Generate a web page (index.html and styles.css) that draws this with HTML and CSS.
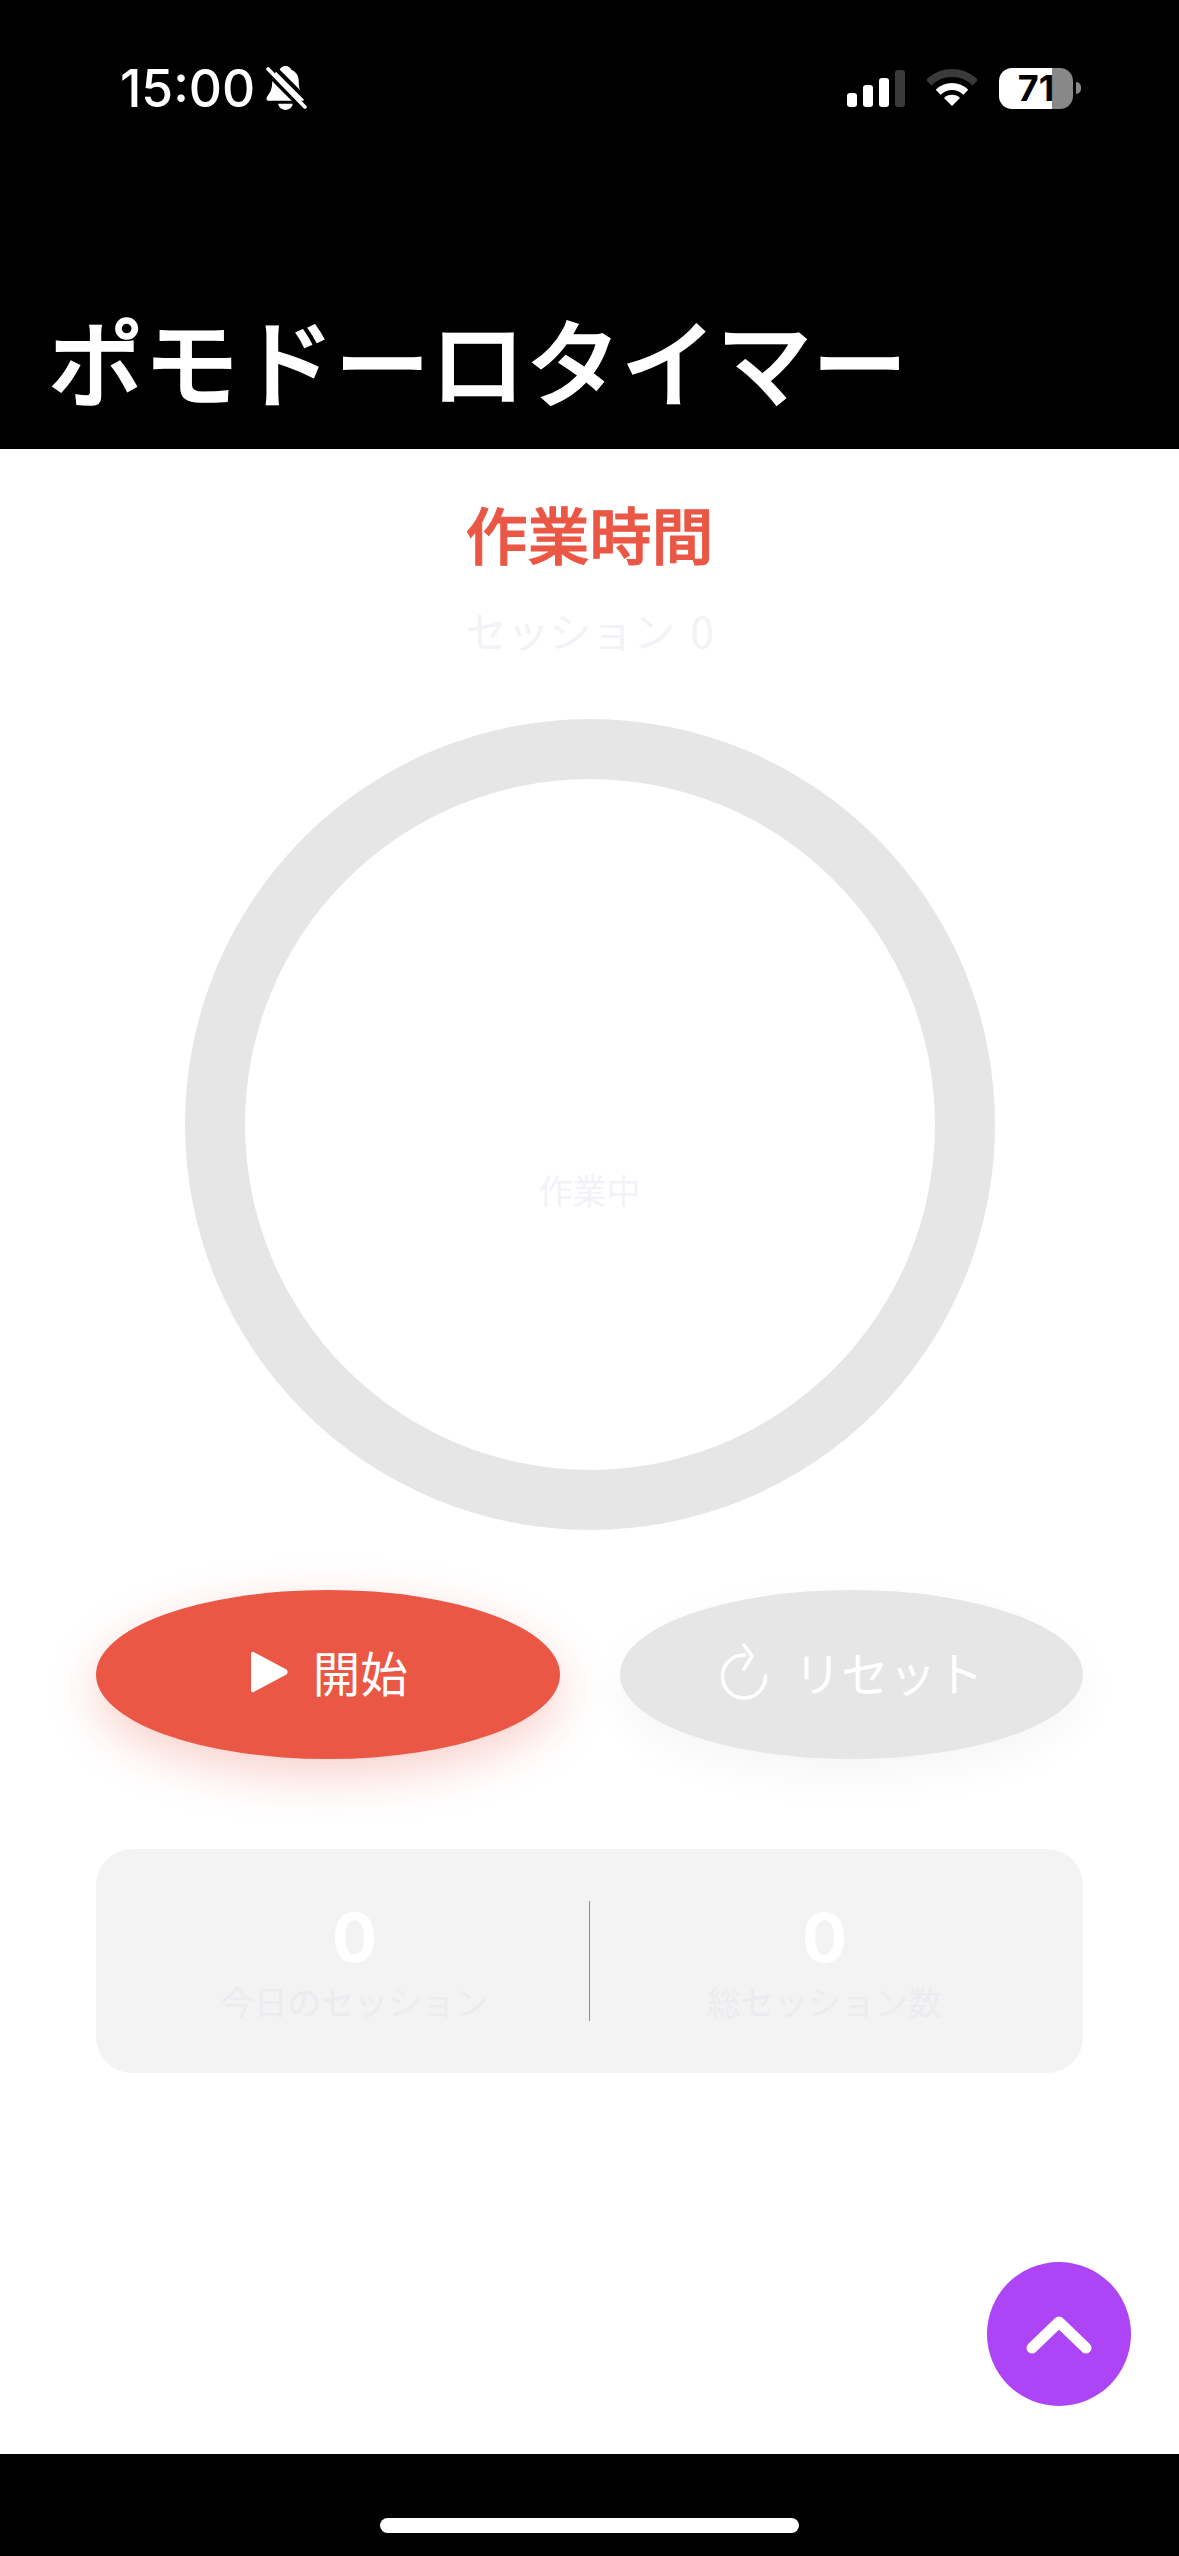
FILE: index.html
```html
<!DOCTYPE html>
<html lang="ja">

<head>
    <meta charset="UTF-8">
    <meta name="viewport" content="width=device-width, initial-scale=1.0">
    <title>ポモドーロタイマー</title>
    <link rel="stylesheet" href="styles.css">
</head>

<body>
    <header class="top">
        <div class="status-bar">
            <div class="status-left">
                <span class="clock">15:00</span>
                <svg class="bell" viewBox="0 0 40 44">
                    <path d="M19 0c3 0 5 2 6 4 5 2 7 6 7 12 0 7 2 10 5 14 1 2 1 4-2 4H3c-3 0-3-2-2-4 3-4 5-7 5-14 0-6 2-10 7-12 1-2 3-4 6-4z" fill="#fff" />
                    <path d="M12 37h14c0 3-3 6-7 6s-7-3-7-6z" fill="#fff" />
                    <path d="M-1 5 35 41" stroke="#000" stroke-width="4" />
                    <path d="M6 -1 42 35" stroke="#000" stroke-width="4" />
                    <path d="M2 3 38 40" stroke="#fff" stroke-width="3.6" stroke-linecap="round" />
                </svg>
            </div>
            <div class="status-right">
                <div class="signal">
                    <span class="bar bar-1"></span>
                    <span class="bar bar-2"></span>
                    <span class="bar bar-3"></span>
                    <span class="bar bar-4"></span>
                </div>
                <svg class="wifi" viewBox="0 0 50 38">
                    <path d="M1.7 13.7A33 33 0 0 1 48.3 13.7" fill="none" stroke="#3a3a3a" stroke-width="8" />
                    <path d="M11.2 23.2A19.5 19.5 0 0 1 38.8 23.2" fill="none" stroke="#fff" stroke-width="7" />
                    <path d="M25 37 17 29A11.3 11.3 0 0 1 33 29Z" fill="#fff" />
                </svg>
                <div class="battery">
                    <div class="battery-body">71</div>
                    <div class="battery-nub"></div>
                </div>
            </div>
        </div>
        <h1 class="app-title">ポモドーロタイマー</h1>
    </header>

    <main class="content">
        <h2 class="mode">作業時間</h2>
        <p class="session">セッション 0</p>

        <div class="ring">
            <span class="ring-label">作業中</span>
        </div>

        <div class="buttons">
            <button class="btn btn-start">
                <svg class="icon-play" viewBox="0 0 38 42">
                    <path d="M1 3c0-2.500 2-3 3.500-1.500L36.500 18.500c1.500 1.500 1.500 3.500 0 5L4.500 40.500C3 42 1 41.500 1 39Z" fill="#fff" />
                </svg>
                開始
            </button>
            <button class="btn btn-reset">
                <svg class="icon-reset" viewBox="0 0 48 58">
                    <path d="M44.500 33A21.500 21.500 0 1 1 24 12" fill="none" stroke="#fff" stroke-width="3.400" stroke-linecap="round" />
                    <path d="M23 2 31 13 23 26" fill="none" stroke="#fff" stroke-width="3.400" stroke-linecap="round" stroke-linejoin="round" />
                </svg>
                リセット
            </button>
        </div>

        <div class="stats">
            <div class="stat">
                <div class="stat-value">0</div>
                <div class="stat-label">今日のセッション</div>
            </div>
            <div class="stat-divider"></div>
            <div class="stat">
                <div class="stat-value">0</div>
                <div class="stat-label">総セッション数</div>
            </div>
        </div>

        <button class="fab">
            <svg viewBox="0 0 144 144">
                <path d="M45 86 72 60 99 86" fill="none" stroke="#fff" stroke-width="11" stroke-linecap="round" stroke-linejoin="round" />
            </svg>
        </button>
    </main>

    <footer class="home-area">
        <div class="home-bar"></div>
    </footer>
</body>

</html>
```

FILE: styles.css
```css
* {
    box-sizing: border-box;
}

body {
    margin: 0;
    width: 1179px;
    height: 2556px;
    display: flex;
    flex-direction: column;
    background: white;
    font-family: "Noto Sans CJK JP", "Noto Sans", sans-serif;
    overflow: hidden;
}

.top {
    height: 449px;
    background: black;
    color: white;
    display: flex;
    flex-direction: column;
    justify-content: space-between;
}

.status-bar {
    display: flex;
    justify-content: space-between;
    padding: 60px 98px 0 120px;
}

.status-left {
    display: flex;
    align-items: center;
    gap: 11px;
    height: 56px;
}

.clock {
    font-family: Inter, sans-serif;
    font-size: 51.500px;
    font-weight: 500;
    line-height: 56px;
}

.bell {
    width: 41px;
    height: 45px;
}

.status-right {
    display: flex;
    align-items: center;
    gap: 22px;
    height: 56px;
}

.signal {
    display: flex;
    align-items: flex-end;
    gap: 6px;
    height: 37px;
}

.bar {
    width: 10px;
    border-radius: 3px;
    background: white;
}

.bar-1 {
    height: 14px;
}

.bar-2 {
    height: 22px;
}

.bar-3 {
    height: 29px;
}

.bar-4 {
    height: 37px;
    background: #3a3a3a;
}

.wifi {
    width: 50px;
    height: 38px;
}

.battery {
    display: flex;
    align-items: center;
    gap: 3px;
}

.battery-body {
    width: 74px;
    height: 41px;
    border-radius: 13px;
    background: linear-gradient(90deg, white 72%, #888 72%);
    color: black;
    font-family: Inter, sans-serif;
    font-size: 36px;
    font-weight: 700;
    line-height: 41px;
    text-align: center;
}

.battery-nub {
    width: 5px;
    height: 12px;
    background: #888;
    border-radius: 0 6px 6px 0;
}

.app-title {
    margin: 0;
    padding: 0 0 35px 48px;
    font-size: 95.500px;
    font-weight: 500;
    -webkit-text-stroke: 1.500px white;
    line-height: 110px;
}

.content {
    position: relative;
    flex: 1;
    display: flex;
    flex-direction: column;
    align-items: center;
    padding-top: 44px;
}

.mode {
    margin: 0;
    color: #ea5745;
    font-size: 62px;
    font-weight: 500;
    -webkit-text-stroke: 1px #ea5745;
    line-height: 80px;
}

.session {
    margin: 32px 0 0;
    color: #f2f2f7;
    font-size: 42px;
    word-spacing: 6px;
    line-height: 50px;
}

.ring {
    width: 810px;
    height: 811px;
    margin-top: 64px;
    border: 60px solid #e6e6e6;
    border-radius: 50%;
    display: flex;
    align-items: center;
    justify-content: center;
    padding-top: 130px;
}

.ring-label {
    color: #f2f2f7;
    font-size: 34px;
    line-height: 40px;
}

.buttons {
    display: flex;
    gap: 60px;
    width: 987px;
    margin-top: 60px;
}

.btn {
    flex: 1;
    height: 169px;
    padding: 0 0 6px 2px;
    border: none;
    border-radius: 50%;
    color: white;
    font-family: inherit;
    font-size: 47.500px;
    display: flex;
    align-items: center;
    justify-content: center;
    gap: 25px;
}

.btn-start {
    background: #ea5745;
    box-shadow: 0 16px 48px rgba(235, 88, 71, 0.28);
}

.btn-reset {
    background: #e6e6e6;
    box-shadow: 0 16px 48px rgba(0, 0, 0, 0.04);
}

.icon-play {
    width: 38px;
    height: 42px;
}

.icon-reset {
    width: 48px;
    height: 58px;
}

.stats {
    width: 987px;
    height: 224px;
    margin-top: 90px;
    padding: 0 24px;
    border-radius: 36px;
    background: #f3f3f3;
    display: flex;
    align-items: center;
}

.stat {
    flex: 1;
    text-align: center;
}

.stat-value {
    color: white;
    font-family: Inter, sans-serif;
    font-size: 67px;
    font-weight: 700;
    line-height: 80px;
}

.stat-label {
    color: #ebebf0;
    font-size: 33.500px;
    line-height: 46px;
}

.stat-divider {
    width: 1px;
    height: 120px;
    background: #8e8e8e;
}

.fab {
    position: absolute;
    right: 48px;
    bottom: 48px;
    width: 144px;
    height: 144px;
    padding: 0;
    border: none;
    border-radius: 50%;
    background: #ad44f5;
}

.fab svg {
    display: block;
}

.home-area {
    height: 102px;
    background: black;
    display: flex;
    justify-content: center;
    padding-top: 64px;
}

.home-bar {
    width: 419px;
    height: 15px;
    border-radius: 8px;
    background: white;
}
```
